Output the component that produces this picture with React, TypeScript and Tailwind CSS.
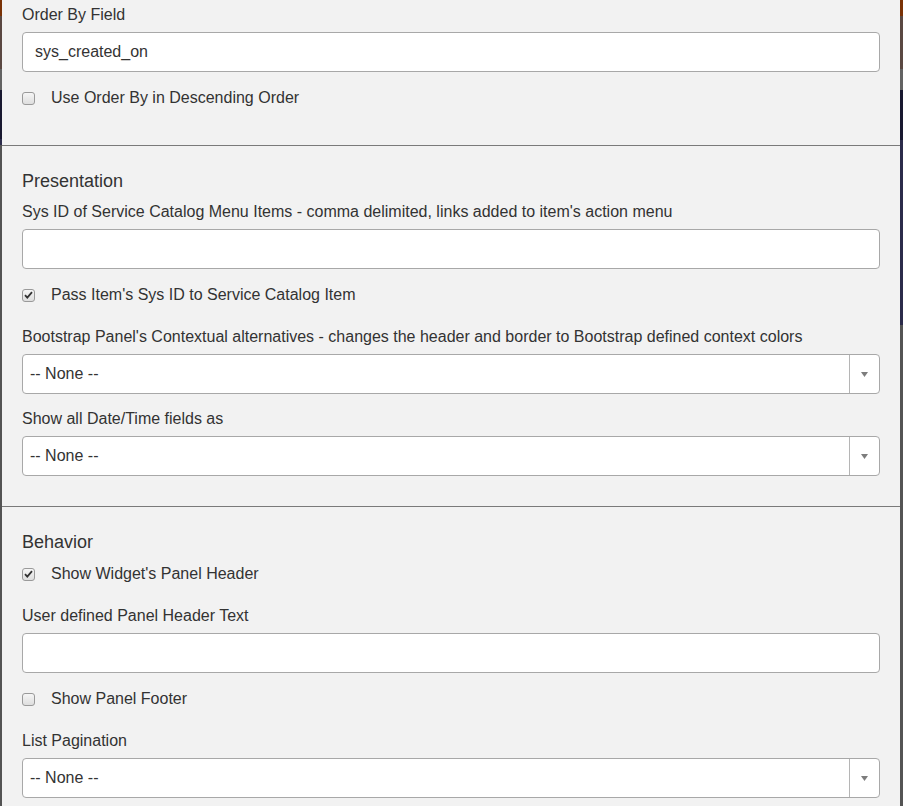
import React from 'react';

const font = { fontFamily: '"Liberation Sans", Arial, sans-serif' };

const Label: React.FC<{ children: React.ReactNode }> = ({ children }) => (
  <div className="text-[16px] leading-[20px] text-[#333] mb-[7px] whitespace-nowrap">{children}</div>
);

const TextField: React.FC<{ label: string; value?: string }> = ({ label, value = '' }) => (
  <div className="mb-[15px]">
    <Label>{label}</Label>
    <div className="h-[40px] bg-white border border-[#a8a8a8] rounded-[4px] flex items-center pl-[12px] text-[16px] text-[#333]">
      {value}
    </div>
  </div>
);

const SelectField: React.FC<{ label: string; value: string }> = ({ label, value }) => (
  <div className="mb-[15px]">
    <Label>{label}</Label>
    <div className="h-[40px] bg-white border border-[#a8a8a8] rounded-[4px] flex items-center text-[16px] text-[#333]">
      <div className="flex-1 pl-[7px]">{value}</div>
      <div className="w-[30px] h-full border-l border-[#b5b5b5] flex items-center justify-center">
        <svg width="7" height="5" viewBox="0 0 7 5">
          <path d="M0 0 H7 L3.5 5 Z" fill="#7d7d7d" />
        </svg>
      </div>
    </div>
  </div>
);

const Check: React.FC<{ label: string; checked?: boolean }> = ({ label, checked }) => (
  <div className="h-[22px] mb-[21px] flex items-center">
    <span className="w-[13px] h-[13px] border border-[#9a9a9a] rounded-[3px] bg-gradient-to-b from-[#f6f6f6] to-[#dedede] flex items-center justify-center">
      {checked && (
        <svg width="9" height="8" viewBox="0 0 9 8">
          <path d="M1 4.2 L3.3 6.6 L8 1.2" stroke="#333" strokeWidth="1.8" fill="none" />
        </svg>
      )}
    </span>
    <span className="ml-[16px] text-[16px] text-[#333]">{label}</span>
  </div>
);

const Heading: React.FC<{ children: React.ReactNode }> = ({ children }) => (
  <div className="text-[18px] leading-[24px] text-[#333] mb-[9px]">{children}</div>
);

export default function App() {
  return (
    <div className="w-[903px] h-[806px] overflow-hidden flex bg-[#f2f2f2]" style={font}>
      <div className="w-[2px] flex flex-col">
        <div className="h-[16px] bg-[#7a3206]" />
        <div className="h-[53px] bg-[#5a4842]" />
        <div className="h-[21px] bg-[#636363]" />
        <div className="h-[49px] bg-[#181830]" />
        <div className="h-[6px] bg-[#2b2b4a]" />
        <div className="flex-1 bg-[#545454]" />
      </div>
      <div className="flex-1 flex flex-col">
        <section className="px-[20px] pt-[5px] pb-[15px] border-b border-[#7a7a7a]">
          <TextField label="Order By Field" value="sys_created_on" />
          <Check label="Use Order By in Descending Order" />
        </section>
        <section className="px-[20px] pt-[23px] pb-[15px] border-b border-[#7a7a7a]">
          <Heading>Presentation</Heading>
          <TextField label="Sys ID of Service Catalog Menu Items - comma delimited, links added to item's action menu" />
          <Check label="Pass Item's Sys ID to Service Catalog Item" checked />
          <SelectField
            label="Bootstrap Panel's Contextual alternatives - changes the header and border to Bootstrap defined context colors"
            value="-- None --"
          />
          <SelectField label="Show all Date/Time fields as" value="-- None --" />
        </section>
        <section className="px-[20px] pt-[23px] pb-[15px]">
          <Heading>Behavior</Heading>
          <Check label="Show Widget's Panel Header" checked />
          <TextField label="User defined Panel Header Text" />
          <Check label="Show Panel Footer" />
          <SelectField label="List Pagination" value="-- None --" />
        </section>
      </div>
      <div className="w-[3px] flex flex-col">
        <div className="h-[16px] bg-[#7a3206]" />
        <div className="h-[53px] bg-[#5a4842]" />
        <div className="h-[21px] bg-[#636363]" />
        <div className="h-[50px] bg-[#181830]" />
        <div className="h-[185px] bg-[#2b2b4a]" />
        <div className="flex-1 bg-[#545454]" />
      </div>
    </div>
  );
}
